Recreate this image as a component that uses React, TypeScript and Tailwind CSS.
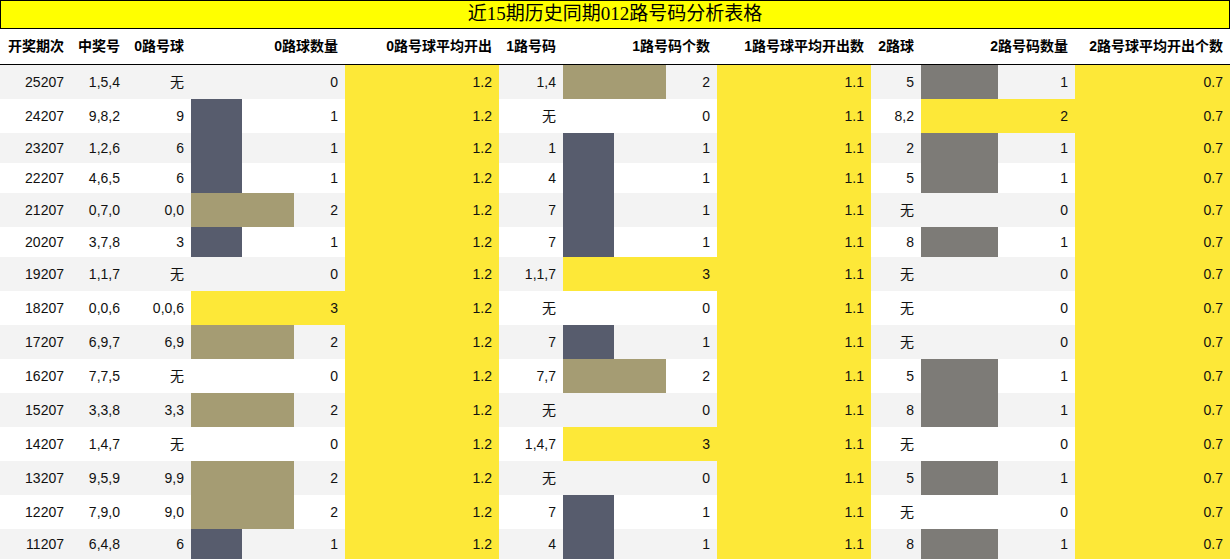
import React from "react";

type Row = [string, string, string, number, string, number, string, number];

const rows: Row[] = [
  ["25207", "1,5,4", "无", 0, "1,4", 2, "5", 1],
  ["24207", "9,8,2", "9", 1, "无", 0, "8,2", 2],
  ["23207", "1,2,6", "6", 1, "1", 1, "2", 1],
  ["22207", "4,6,5", "6", 1, "4", 1, "5", 1],
  ["21207", "0,7,0", "0,0", 2, "7", 1, "无", 0],
  ["20207", "3,7,8", "3", 1, "7", 1, "8", 1],
  ["19207", "1,1,7", "无", 0, "1,1,7", 3, "无", 0],
  ["18207", "0,0,6", "0,0,6", 3, "无", 0, "无", 0],
  ["17207", "6,9,7", "6,9", 2, "7", 1, "无", 0],
  ["16207", "7,7,5", "无", 0, "7,7", 2, "5", 1],
  ["15207", "3,3,8", "3,3", 2, "无", 0, "8", 1],
  ["14207", "1,4,7", "无", 0, "1,4,7", 3, "无", 0],
  ["13207", "9,5,9", "9,9", 2, "无", 0, "5", 1],
  ["12207", "7,9,0", "9,0", 2, "7", 1, "无", 0],
  ["11207", "6,4,8", "6", 1, "4", 1, "8", 1],
];

const headers = [
  "开奖期次",
  "中奖号",
  "0路号球",
  "0路球数量",
  "0路号球平均开出",
  "1路号码",
  "1路号码个数",
  "1路号球平均开出数",
  "2路球",
  "2路号码数量",
  "2路号球平均开出个数",
];

const grid =
  "grid grid-cols-[71px_56px_64px_154px_154px_64px_154px_154px_50px_154px_155px]";

function color3(v: number) {
  if (v === 1) return "bg-[#575c6d]";
  if (v === 2) return "bg-[#a59c73]";
  if (v === 3) return "bg-[#fde838]";
  return "bg-transparent";
}

function color2(v: number) {
  if (v === 1) return "bg-[#7d7b77]";
  if (v === 2) return "bg-[#fde838]";
  return "bg-transparent";
}

function Cell({ children, className = "" }: { children: React.ReactNode; className?: string }) {
  return (
    <div className={`flex items-center justify-end pr-[7px] ${className}`}>
      {children}
    </div>
  );
}

function BarCell({ v, max, cls }: { v: number; max: number; cls: string }) {
  return (
    <div className="relative flex items-center justify-end pr-[7px]">
      {v > 0 && (
        <div
          className={`absolute left-0 top-0 bottom-0 ${cls}`}
          style={{ width: `${(v / max) * 100}%` }}
        />
      )}
      <span className="relative">{v}</span>
    </div>
  );
}

export default function App() {
  return (
    <div
      className="w-[1230px] bg-white text-[14px] text-[#111]"
      style={{ fontFamily: '"Liberation Sans", "Noto Sans CJK SC", sans-serif' }}
    >
      <div
        className="h-[29px] border border-black bg-[#ffff00] flex items-center justify-center text-[19px] text-black"
        style={{ fontFamily: '"Liberation Serif", "Noto Sans CJK SC", serif' }}
      >
        近15期历史同期012路号码分析表格
      </div>
      <div className={`${grid} h-[36px] border-b border-black font-bold text-black`}>
        {headers.map((h) => (
          <Cell key={h}>{h}</Cell>
        ))}
      </div>
      {rows.map((r, i) => {
        const tall = r.some((x) => x === "无");
        const bg = i % 2 === 0 ? "bg-[#f3f3f3]" : "bg-white";
        return (
          <div key={r[0]} className={`${grid} ${tall ? "h-[34px]" : "h-[30px]"} ${bg}`}>
            <Cell>{r[0]}</Cell>
            <Cell>{r[1]}</Cell>
            <Cell>{r[2]}</Cell>
            <BarCell v={r[3]} max={3} cls={color3(r[3])} />
            <Cell className="bg-[#fde838]">1.2</Cell>
            <Cell>{r[4]}</Cell>
            <BarCell v={r[5]} max={3} cls={color3(r[5])} />
            <Cell className="bg-[#fde838]">1.1</Cell>
            <Cell>{r[6]}</Cell>
            <BarCell v={r[7]} max={2} cls={color2(r[7])} />
            <Cell className="bg-[#fde838]">0.7</Cell>
          </div>
        );
      })}
    </div>
  );
}
